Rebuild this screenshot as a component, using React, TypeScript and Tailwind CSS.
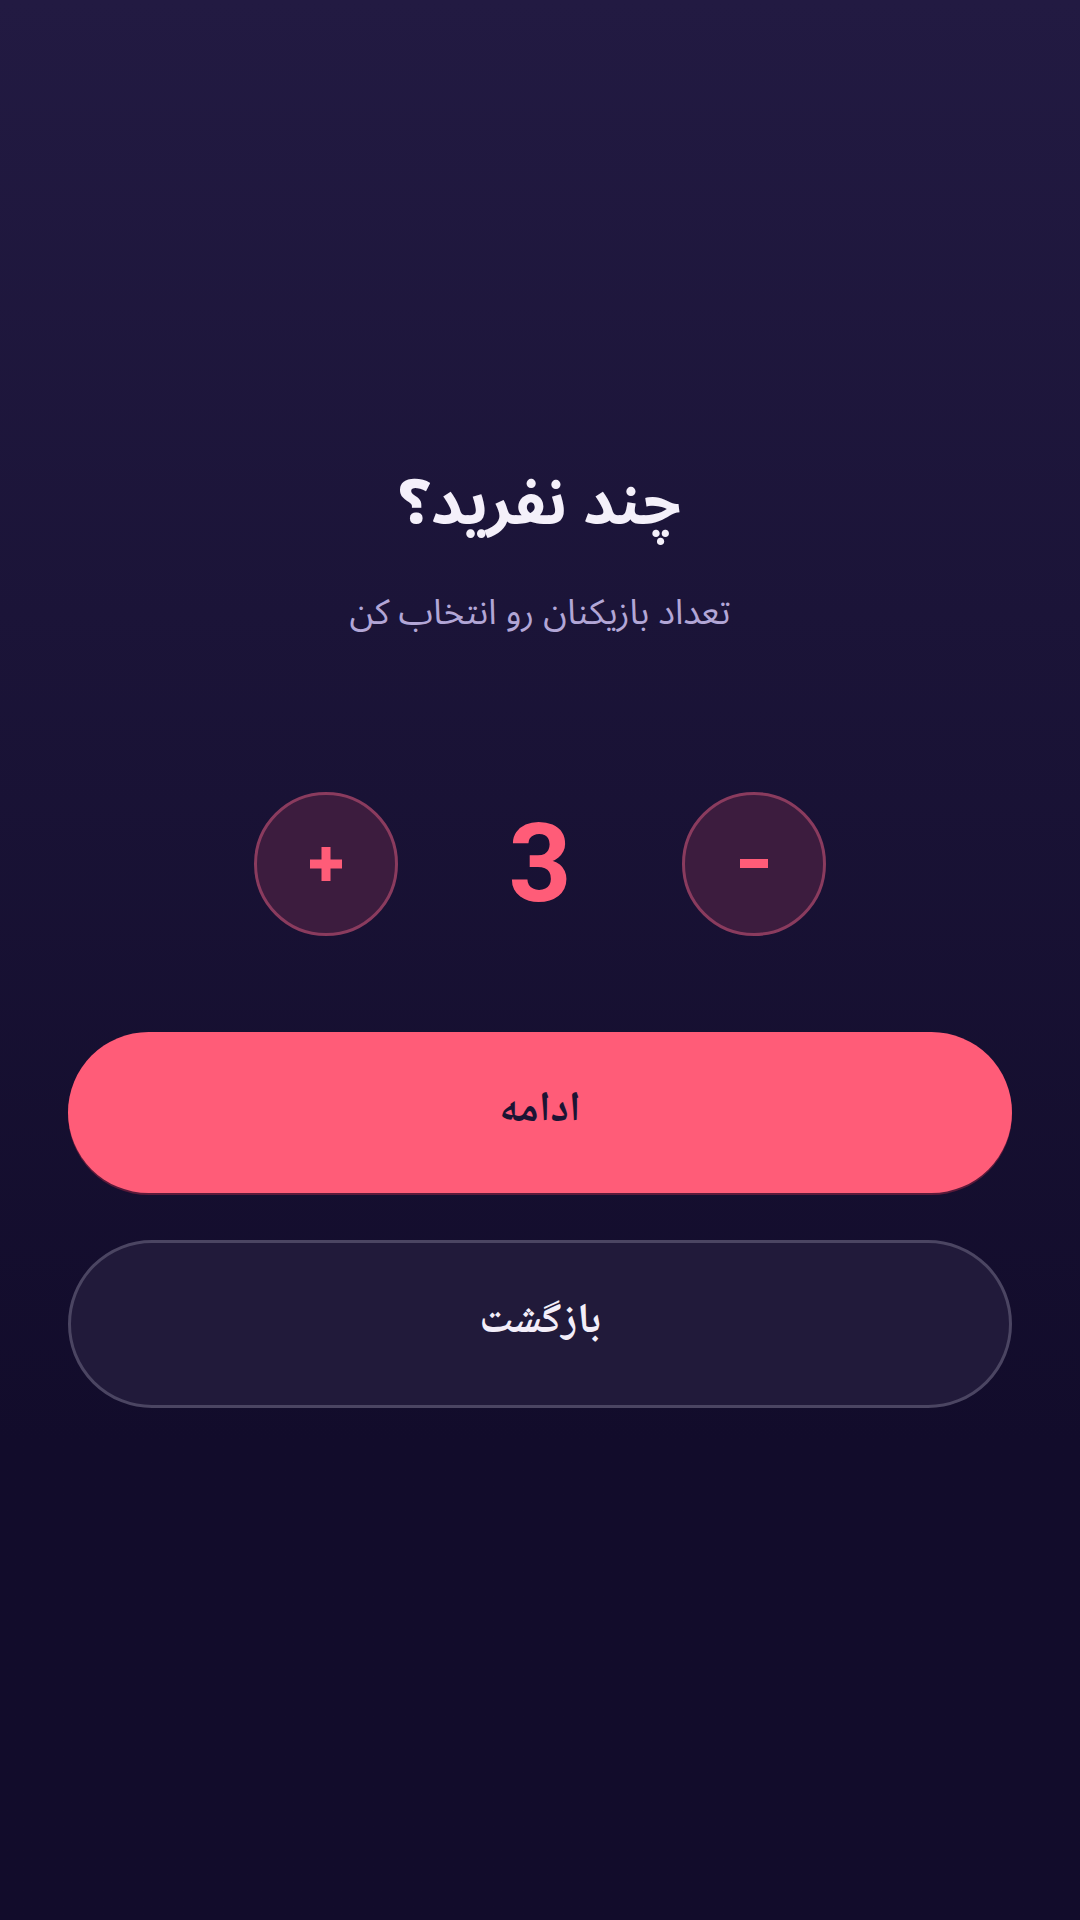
import React, { useState } from 'react';

const sans = '"Noto Sans Arabic", "Noto Sans", sans-serif';
const naskh = '"Noto Naskh Arabic", "Noto Sans Arabic", serif';

const StepButton: React.FC<{ kind: 'plus' | 'minus'; onClick: () => void }> = ({ kind, onClick }) => (
  <button
    onClick={onClick}
    aria-label={kind === 'plus' ? 'increase' : 'decrease'}
    className="flex h-36 w-36 items-center justify-center rounded-full border-[3px] border-[#8a3b5e] bg-[#3c1c3e]"
  >
    <svg width="34" height="34" viewBox="0 0 34 34">
      {kind === 'plus' ? (
        <>
          <rect x="1" y="12.5" width="32" height="9" fill="#ff5c78" />
          <rect x="12.5" y="0" width="9" height="34" fill="#ff5c78" />
        </>
      ) : (
        <rect x="3" y="12" width="28" height="9" fill="#ff5c78" />
      )}
    </svg>
  </button>
);

export default function App() {
  const [count, setCount] = useState(3);

  return (
    <div
      dir="rtl"
      className="min-h-screen bg-linear-to-b from-[#221a42] to-[#120c2b] to-75%"
      style={{ fontFamily: sans }}
    >
      <main className="flex flex-col items-center px-[68px] pt-[458px]">
        <h1 className="text-[62px] font-bold leading-[1.5] text-[#f4f0fa]">چند نفرید؟</h1>
        <p className="mt-[36px] text-[35px] leading-[1.5] text-[#b2a6d6]">تعداد بازیکنان رو انتخاب کن</p>

        <div className="mt-[152px] flex items-center gap-[82px]" dir="ltr">
          <StepButton kind="plus" onClick={() => setCount((c) => Math.min(c + 1, 12))} />
          <div
            className="w-[120px] text-center text-[110px] font-bold leading-none text-[#ff5c78]"
            style={{ fontFamily: 'Roboto, sans-serif' }}
          >
            {count}
          </div>
          <StepButton kind="minus" onClick={() => setCount((c) => Math.max(c - 1, 3))} />
        </div>

        <div className="mt-[96px] flex w-full flex-col gap-[47px]" style={{ fontFamily: naskh }}>
          <button className="flex h-[161px] w-full items-center justify-center rounded-full bg-[#ff5c78] text-[42px] font-bold text-[#1c1434] shadow-[0_2px_0_#5a1a3a]">
            ادامه
          </button>
          <button className="flex h-[168px] w-full items-center justify-center rounded-full border-[3px] border-[#4b4562] bg-[#211a3a] text-[42px] font-bold text-[#f3eef9]">
            بازگشت
          </button>
        </div>
      </main>
    </div>
  );
}
